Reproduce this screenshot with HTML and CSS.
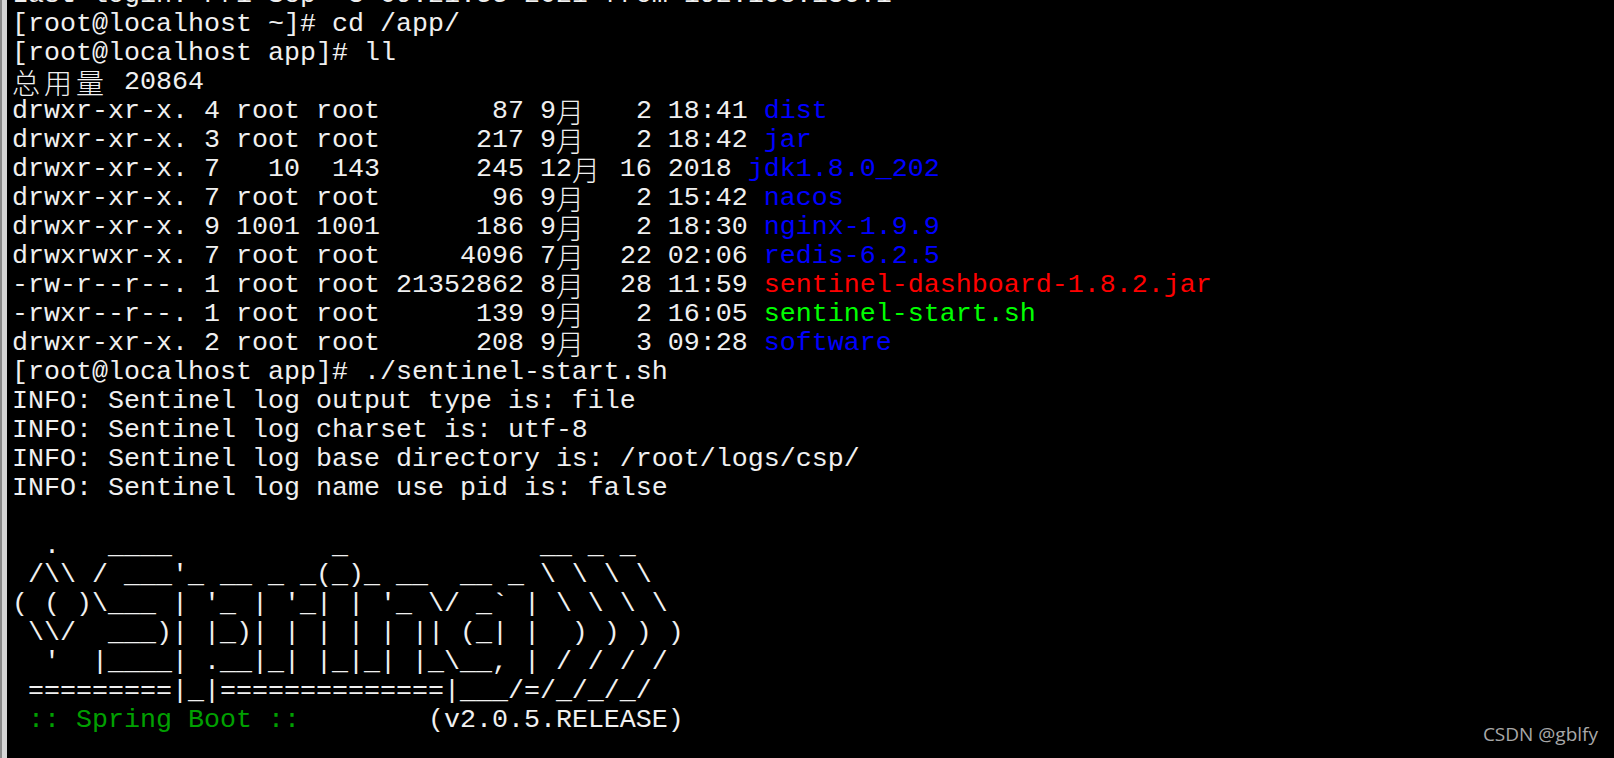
FILE: index.html
```html
<!DOCTYPE html>
<html lang="zh-CN">
<head>
<meta charset="utf-8">
<title>terminal</title>
<link rel="stylesheet" href="styles.css">
</head>
<body>
<div class="frame">
<div class="screen">
<pre class="term">Last login: Fri Sep  3 09:21:55 2021 from 192.168.136.1
[root@localhost ~]# cd /app/
[root@localhost app]# ll
<span class="cjk">总</span><span class="cjk">用</span><span class="cjk">量</span> 20864
drwxr-xr-x. 4 root root       87 9<span class="cjk">月</span>   2 18:41 <span class="dir">dist</span>
drwxr-xr-x. 3 root root      217 9<span class="cjk">月</span>   2 18:42 <span class="dir">jar</span>
drwxr-xr-x. 7   10  143      245 12<span class="cjk">月</span> 16 2018 <span class="dir">jdk1.8.0_202</span>
drwxr-xr-x. 7 root root       96 9<span class="cjk">月</span>   2 15:42 <span class="dir">nacos</span>
drwxr-xr-x. 9 1001 1001      186 9<span class="cjk">月</span>   2 18:30 <span class="dir">nginx-1.9.9</span>
drwxrwxr-x. 7 root root     4096 7<span class="cjk">月</span>  22 02:06 <span class="dir">redis-6.2.5</span>
-rw-r--r--. 1 root root 21352862 8<span class="cjk">月</span>  28 11:59 <span class="arc">sentinel-dashboard-1.8.2.jar</span>
-rwxr--r--. 1 root root      139 9<span class="cjk">月</span>   2 16:05 <span class="exe">sentinel-start.sh</span>
drwxr-xr-x. 2 root root      208 9<span class="cjk">月</span>   3 09:28 <span class="dir">software</span>
[root@localhost app]# ./sentinel-start.sh
INFO: Sentinel log output type is: file
INFO: Sentinel log charset is: utf-8
INFO: Sentinel log base directory is: /root/logs/csp/
INFO: Sentinel log name use pid is: false

  .   ____          _            __ _ _
 /\\ / ___'_ __ _ _(_)_ __  __ _ \ \ \ \
( ( )\___ | '_ | '_| | '_ \/ _` | \ \ \ \
 \\/  ___)| |_)| | | | | || (_| |  ) ) ) )
  '  |____| .__|_| |_|_| |_\__, | / / / /
 =========|_|==============|___/=/_/_/_/
<span class="spring"> :: Spring Boot :: </span>       (v2.0.5.RELEASE)
</pre>
</div>
</div>
<div class="watermark">CSDN @gblfy</div>
</body>
</html>
```
FILE: styles.css
```css
html, body {
  margin: 0;
  padding: 0;
  background: #000;
  width: 1614px;
  height: 758px;
  overflow: hidden;
}

.frame {
  height: 758px;
  border-left: 2px solid #8a8a8a;
  box-sizing: border-box;
}

.screen {
  height: 100%;
  border-left: 5px solid #d6d6d6;
  box-sizing: border-box;
  overflow: hidden;
  padding-left: 5px;
}

.term {
  margin: -19px 0 0 0;
  font-family: "Liberation Mono", "Noto Sans CJK SC", monospace;
  font-size: 26.66px;
  line-height: 29px;
  color: #f0f0f0;
  white-space: pre;
}

/* each CJK glyph takes two terminal cells (32px) */
.cjk {
  display: inline-block;
  width: 32px;
  font-family: "Noto Sans CJK SC", sans-serif;
  font-size: 28px;
  font-weight: 300;
  text-align: left;
  vertical-align: top;
  line-height: 29px;
}

.dir { color: #0000ff; }
.arc { color: #ff0000; }
.exe { color: #00ff00; }
.spring { color: #00a000; }

.watermark {
  position: absolute;
  right: 16px;
  top: 722px;
  font-family: "Open Sans", "Noto Sans", sans-serif;
  font-size: 19px;
  line-height: 24px;
  color: #a8a8a8;
}
```
